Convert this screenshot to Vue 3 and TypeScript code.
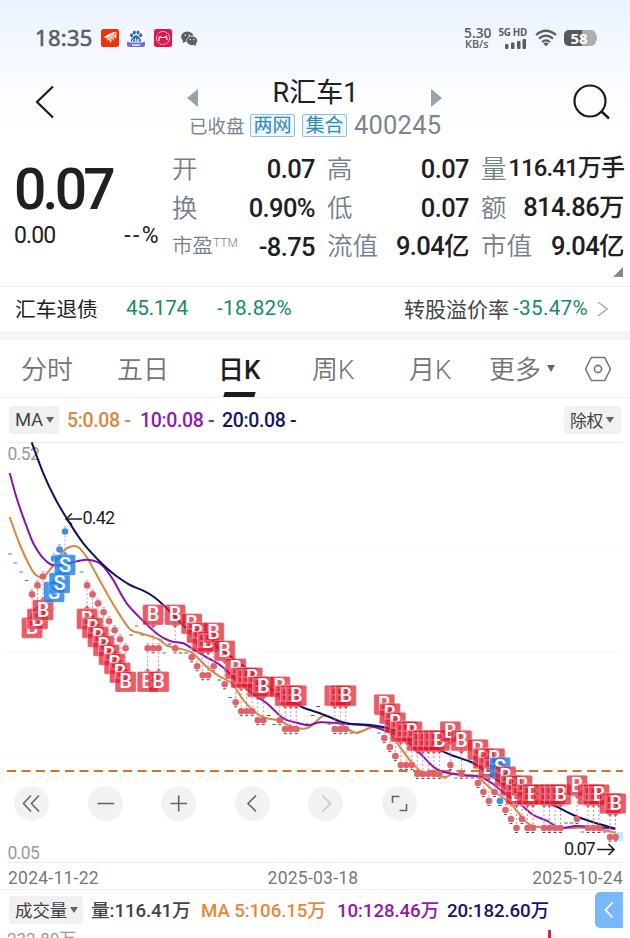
<script setup lang="ts">
type Point = [number, number]
type Kind = 'B' | 'S'
interface Marker { x: number; y: number; boxY: number; kind: Kind; below: boolean }

const FIRST_X = 10
const STEP_X = 5.505
const TOP_Y = 89.5
const STEP_Y = 8.985
const BOX_OFFSET = 33.5

const xOf = (i: number): number => FIRST_X + STEP_X * i
const yOf = (n: number): number => TOP_Y + STEP_Y * n

// [bar index, price level below the peak, kind, box under the dot]
const signals: [number, number, Kind, boolean][] = [
  [4, 7, 'B', true], [5, 6, 'B', true], [6, 5, 'B', true],
  [8, 3, 'S', true], [9, 2, 'S', true], [10, 0, 'S', true],
  [14, 6, 'B', true], [15, 7, 'B', true], [16, 8, 'B', true], [17, 9, 'B', true],
  [18, 10, 'B', true], [19, 11, 'B', true], [20, 12, 'B', true], [21, 13, 'B', true],
  [25, 13, 'B', true], [26, 13, 'B', false], [27, 13, 'B', true], [30, 13, 'B', false],
  [33, 14, 'B', false], [34, 15, 'B', false], [35, 16, 'B', false], [36, 16, 'B', false],
  [37, 15, 'B', false], [39, 17, 'B', false], [41, 19, 'B', false], [42, 20, 'B', false],
  [43, 20, 'B', false], [44, 20, 'B', false], [45, 21, 'B', false], [46, 21, 'B', false],
  [49, 21, 'B', false], [50, 22, 'B', false], [51, 22, 'B', false], [52, 22, 'B', false],
  [59, 22, 'B', false], [60, 22, 'B', false], [61, 22, 'B', false],
  [68, 23, 'B', false], [69, 24, 'B', false], [70, 25, 'B', false], [71, 26, 'B', false],
  [72, 26, 'B', false], [73, 26, 'B', false], [74, 27, 'B', false], [75, 27, 'B', false],
  [76, 27, 'B', false], [77, 27, 'B', false], [78, 27, 'B', false], [80, 26, 'B', false],
  [82, 27, 'B', false], [85, 28, 'B', false], [86, 29, 'B', false], [87, 30, 'B', false],
  [88, 29, 'B', false], [89, 30, 'S', false], [90, 31, 'B', false], [91, 32, 'B', false],
  [92, 33, 'B', false], [93, 32, 'B', false], [94, 33, 'B', false], [95, 33, 'B', false],
  [97, 33, 'B', false], [98, 33, 'B', false], [99, 33, 'B', false], [100, 33, 'B', false],
  [103, 32, 'B', false], [105, 33, 'B', false], [106, 33, 'B', false], [107, 33, 'B', false],
  [109, 34, 'B', false], [110, 34, 'B', false],
]

const markers: Marker[] = signals.map(([i, n, kind, below]) => ({
  x: xOf(i),
  y: yOf(n),
  boxY: yOf(n) + (below ? BOX_OFFSET : -BOX_OFFSET),
  kind,
  below,
}))

// Flat sessions without a trade signal: [bar index, y, colour]
const quiet: [number, number, string][] = [
  [0, 112, '#2c8b84'], [1, 121, '#2c8b84'], [2, 130, '#2c8b84'], [3, 138.5, '#2c8b84'],
  [13, 130, '#2c8b84'], [22, 193, '#555'], [23, 184, '#a66'], [24, 193, '#555'],
  [28, 211, '#2c8b84'], [29, 202, '#555'], [31, 211, '#555'], [32, 211, '#555'],
  [38, 238, '#555'], [40, 255.5, '#2c8b84'], [47, 273.5, '#a33'], [48, 282.5, '#2c8b84'],
  [54, 282, '#555'], [55, 273.5, '#a33'], [56, 264.5, '#a33'], [58, 282, '#2c8b84'],
  [62, 291, '#555'], [63, 291, '#a33'], [67, 291, '#2c8b84'], [79, 336, '#a66'],
  [81, 336, '#2c8b84'], [83, 336, '#2c8b84'], [84, 336, '#555'], [96, 385, '#555'],
  [101, 381, '#555'], [102, 381, '#555'], [104, 390, '#2c8b84'], [108, 390, '#555'],
]

function curve(points: Point[]): string {
  let d = `M${points[0][0]} ${points[0][1]}`
  for (let i = 0; i < points.length - 1; i++) {
    const a = points[Math.max(i - 1, 0)]
    const b = points[i]
    const c = points[i + 1]
    const e = points[Math.min(i + 2, points.length - 1)]
    const c1 = [b[0] + (c[0] - a[0]) / 6, b[1] + (c[1] - a[1]) / 6]
    const c2 = [c[0] - (e[0] - b[0]) / 6, c[1] - (e[1] - b[1]) / 6]
    d += `C${c1[0].toFixed(1)} ${c1[1].toFixed(1)} ${c2[0].toFixed(1)} ${c2[1].toFixed(1)} ${c[0]} ${c[1]}`
  }
  return d
}

const ma5 = curve([
  [9.7, 75], [20, 103], [32, 128], [38.3, 134.5], [44, 134.5], [55, 121], [63, 109.5], [70.7, 104.5], [78, 105],
  [87.3, 116], [96.7, 133], [106.7, 151], [116.7, 168], [130, 187.3], [140, 191], [158.3, 197], [166.7, 203.5],
  [176.7, 206], [191.7, 210.7], [208.3, 226.3], [220, 234.7], [231.7, 241.5], [243.3, 258], [253.3, 268.7],
  [263.3, 275.3], [280, 278.7], [290, 284], [306.7, 286.3], [321.7, 274.7], [328, 274], [335, 278], [346.7, 286.3],
  [356.7, 290.7], [371.7, 285.3], [381.7, 285.3], [390, 291.3], [403.3, 309.7], [413.3, 322.3], [421.7, 329.7],
  [433, 333], [445, 335], [453, 332], [466.7, 334], [476.7, 334.7], [493.3, 348.7], [510, 361.3], [521.7, 374.7],
  [533.3, 384], [567, 386], [586.7, 385.7], [603.3, 388], [615.3, 390.7],
])
const ma10 = curve([
  [9.7, 31], [16.7, 56.3], [26.7, 84.7], [33.3, 101.3], [43.3, 116.3], [55, 123.5], [75, 119.7], [87.3, 117.7],
  [98.3, 120.3], [105, 126.3], [113.3, 138], [126.7, 161.3], [143.3, 179], [158, 192.5], [170, 199], [183.3, 201.3],
  [193.3, 207.3], [206.7, 215.3], [220, 223], [233.3, 234.7], [250, 249.7], [266.7, 261.3], [283.3, 276.3],
  [296.7, 280.7], [308.3, 283.3], [320, 280.3], [340, 281.3], [348.3, 282], [370, 284], [388.3, 289.7], [403, 296],
  [416.7, 308], [433.3, 324.7], [443.3, 330], [462, 333], [480, 334.7], [493, 342], [506.7, 353], [520, 362],
  [533.3, 373], [546.7, 378.7], [560, 386], [575, 384], [586.7, 384.7], [603, 385.7], [615.3, 386.7],
])
const ma20 = curve([
  [31.7, 0.3], [43.3, 31.3], [55, 56.3], [66.7, 76.3], [83.3, 101.3], [103.3, 123], [115, 133], [130, 143],
  [143.3, 148.7], [154, 155], [163.3, 163], [176.7, 176.3], [186.7, 186.3], [213, 202], [243.3, 224], [273, 248],
  [300, 264], [310, 268], [320, 271.3], [340, 279.2], [350, 281.7], [370, 283], [388.3, 286.3], [416, 298],
  [443.3, 309.7], [453, 313.7], [470, 319.5], [480, 325.3], [500, 340], [530, 354], [556.7, 364.7], [573.3, 373],
  [593.3, 380.3], [615.3, 386.7],
])

const stats: { label: string; value: string; sup?: string; cls?: string }[][] = [
  [{ label: '开', value: '0.07' }, { label: '换', value: '0.90%' }, { label: '市盈', sup: 'TTM', value: '-8.75', cls: 'small' }],
  [{ label: '高', value: '0.07' }, { label: '低', value: '0.07' }, { label: '流值', value: '9.04亿' }],
  [{ label: '量', value: '116.41万手', cls: 'tight' }, { label: '额', value: '814.86万' }, { label: '市值', value: '9.04亿' }],
]

const tabs = ['分时', '五日', '日K', '周K', '月K']
const tools: { name: string; d: string; muted?: boolean }[] = [
  { name: 'start', d: 'M17 9.5 9.5 17.5 17 25.5M25 9.5 17.5 17.5 25 25.5' },
  { name: 'out', d: 'M9.5 17.5H26' },
  { name: 'in', d: 'M9.5 17.5H26M17.7 9.5V25.5' },
  { name: 'prev', d: 'M21 9.5 13 17.5 21 25.5' },
  { name: 'next', d: 'M14.5 9.5 22.5 17.5 14.5 25.5', muted: true },
  { name: 'expand', d: 'M10.5 17V10.5H17.5M24.5 18V24.5H17.5' },
]
</script>

<template>
  <main class="screen">
    <header class="top">
      <div class="status">
        <span class="clock">18:35</span>
        <svg class="app" viewBox="0 0 18 18"><rect width="18" height="18" rx="2.5" fill="#ee3208" /><path d="M2.5 8.5Q8 4 15.500 2.800L15 10 12.800 7.200 12.700 12 10.700 9 10 14.500 7.500 10.200 6 12 5.700 9Z" fill="#fff" /><path d="M6 10 14.500 4M9.500 11.500 15 4" stroke="#ee3208" stroke-width=".7" /></svg>
        <svg class="app" viewBox="0 0 18 18"><rect width="18" height="18" rx="2.5" fill="#fff" /><g fill="#236bb5"><ellipse cx="4.6" cy="6.3" rx="1.5" ry="2" /><ellipse cx="7.3" cy="3.5" rx="1.5" ry="2" /><ellipse cx="11" cy="3.5" rx="1.5" ry="2" /><ellipse cx="13.7" cy="6.3" rx="1.5" ry="2" /><path d="M9 6.200c2 0 3 2 4.300 3.300 1.400 1.500.700 4-1.300 4H6c-2.200 0-2.700-2.500-1.300-4C6 8.200 7 6.200 9 6.200Z" /></g><path d="M7 10.500a1.500 1.500 0 1 0 1.500 1.500V9M10 10v3h1.700v-3" fill="none" stroke="#fff" stroke-width=".9" /><path d="M0 12.500Q9 15.500 18 12.500V16a2 2 0 0 1-2 2H2a2 2 0 0 1-2-2Z" fill="#756ee0" /><path d="M5 16H13" stroke="#d9d6ff" stroke-width="1.8" /></svg>
        <svg class="app" viewBox="0 0 18 18"><rect width="18" height="18" rx="2.5" fill="#e3134f" /><circle cx="9" cy="9" r="6.6" fill="none" stroke="#ffc4d4" stroke-width=".9" /><path d="M5 12V8.500L6.200 7.500 7.500 8.500H10.800L12.300 7.200 13.200 11" fill="none" stroke="#fff" stroke-width="1.2" /></svg>
        <svg class="app" viewBox="0 0 18 18"><g fill="#5b5e63"><ellipse cx="7.3" cy="7.8" rx="6.2" ry="5.3" /><path d="M3 11 2.600 14 6 12.500Z" /></g><ellipse cx="12" cy="11.8" rx="5.5" ry="4.7" fill="#5b5e63" stroke="#f1f6ff" stroke-width=".7" /><path d="M13 15.500 16 17 15.500 14Z" fill="#5b5e63" /><g fill="#fff"><circle cx="5.3" cy="6.2" r=".8" /><circle cx="9.3" cy="6.2" r=".8" /><circle cx="10.3" cy="10.5" r=".65" /><circle cx="13.7" cy="10.5" r=".65" /></g></svg>
        <div class="network">
          <div class="speed"><b>5.30</b><i>KB/s</i></div>
          <div class="cell">
            <span>5G HD</span>
            <svg width="22" height="10" viewBox="0 0 22 10" fill="#5a5d61"><rect x="0" y="5" width="3.5" height="5" rx="1" /><rect x="6" y="3.5" width="3.5" height="6.5" rx="1" /><rect x="12" y="2" width="3.5" height="8" rx="1" /><rect x="17.5" y="0" width="3.5" height="10" rx="1" /></svg>
          </div>
          <svg class="wifi" width="22" height="18" viewBox="0 0 22 18"><g fill="none" stroke="#5a5d61" stroke-width="2.2"><path d="M1 6Q11-2.500 21 6" /><path d="M4 9.600Q11 3.700 18 9.600" /><path d="M7 13Q11 9.600 15 13" /></g><path d="M8.200 14.500Q11 12.700 13.800 14.500L11 17.500Z" fill="#5a5d61" /></svg>
          <div class="battery"><span>58</span></div>
        </div>
      </div>
      <div class="title-row">
        <svg class="back" width="20" height="34" viewBox="0 0 20 34"><path d="M18 1.500 2 17 18 32.500" fill="none" stroke="#1c1c1e" stroke-width="2.2" /></svg>
        <div class="heading">
          <div class="name-line">
            <svg width="11" height="18" viewBox="0 0 11 18"><path d="M11 0V18L0 9Z" fill="#98a3af" /></svg>
            <h1>R汇车1</h1>
            <svg width="11" height="18" viewBox="0 0 11 18"><path d="M0 0V18L11 9Z" fill="#98a3af" /></svg>
          </div>
          <div class="sub"><span class="state">已收盘</span><span class="tag">两网</span><span class="tag">集合</span><span class="code">400245</span></div>
        </div>
        <svg class="search" width="37" height="37" viewBox="0 0 37 37"><circle cx="17" cy="17" r="15.5" fill="none" stroke="#1c1c1e" stroke-width="2.2" /><path d="M28 27 36 34.500" stroke="#1c1c1e" stroke-width="2.5" /></svg>
      </div>
    </header>

    <section class="quote">
      <div class="price">
        <strong>0.07</strong>
        <div class="change"><span>0.00</span><span class="pct">--%</span></div>
      </div>
      <dl v-for="(column, c) in stats" :key="c" class="stat-col">
        <div v-for="s in column" :key="s.label" class="stat" :class="s.cls">
          <dt>{{ s.label }}<sup v-if="s.sup">{{ s.sup }}</sup></dt>
          <dd>{{ s.value }}</dd>
        </div>
      </dl>
      <i class="corner"></i>
    </section>

    <section class="bond">
      <span class="bond-name">汇车退债</span>
      <span class="green bond-price">45.174</span>
      <span class="green bond-rate">-18.82%</span>
      <span class="premium">转股溢价率</span>
      <span class="green premium-rate">-35.47%</span>
      <svg width="11" height="16" viewBox="0 0 11 16"><path d="M1 1 10 8 1 15" fill="none" stroke="#a6acb5" stroke-width="1.5" /></svg>
    </section>

    <nav class="tabs">
      <span v-for="t in tabs" :key="t" class="tab" :class="{ active: t === '日K' }">{{ t }}</span>
      <span class="tab more">更多<i class="caret"></i></span>
      <svg class="gear" width="28" height="26" viewBox="0 0 28 26"><path d="M7.300 1.500H20.700L26.500 13 20.700 24.500H7.300L1.500 13Z" fill="none" stroke="#757575" stroke-width="1.6" stroke-linejoin="round" /><circle cx="14" cy="13" r="3.6" fill="none" stroke="#757575" stroke-width="1.6" /></svg>
    </nav>

    <section class="averages">
      <span class="chip ma">MA<i class="caret"></i></span>
      <span class="o">5:0.08 -</span>
      <span class="p">10:0.08 -</span>
      <span class="n">20:0.08 -</span>
      <span class="chip adjust">除权<i class="caret"></i></span>
    </section>

    <section class="chart">
      <svg class="plot" width="630" height="421" viewBox="0 0 630 421">
        <g stroke="#ececec"><path d="M7 .5H623M7 420.500H623" /></g>
        <path d="M7 105H623M7 210H623M7 315H623" stroke="#eef0f2" stroke-dasharray="2 2" />
        <text x="7.5" y="17.5" class="axis">0.52</text>
        <text x="7.5" y="416.5" class="axis">0.05</text>
        <rect x="615" y="390" width="8" height="9" fill="#bdebf5" />
        <path d="M7 329H623" stroke="#d07528" stroke-width="2" stroke-dasharray="9 5.5" />
        <path v-for="q in quiet" :key="q[0]" :d="`M${xOf(q[0]) - 1.8} ${q[1]}h3.6`" :stroke="q[2]" />
        <g fill="none" stroke-width="2">
          <path :d="ma5" stroke="#d9873d" />
          <path :d="ma10" stroke="#8a12b0" />
          <path :d="ma20" stroke="#0e1266" />
        </g>
        <g v-for="(m, k) in markers" :key="k" :class="m.kind === 'B' ? 'buy' : 'sell'">
          <path :d="`M${m.x} ${m.y}V${m.boxY}`" class="stem" />
          <path v-if="!m.below" :d="`M${m.x - 1.5} ${Math.min(m.y + 4.5, 399)}h3`" stroke="#555" />
          <path v-else :d="`M${m.x - 1.5} ${m.y - 4.5}h3`" stroke="#a99" />
          <circle :cx="m.x" :cy="m.y" r="3.3" class="dot" />
        </g>
        <g v-for="(m, k) in markers" :key="'b' + k" :class="m.kind === 'B' ? 'buy' : 'sell'">
          <rect :x="m.x - 10.5" :y="m.boxY - 10.3" width="21" height="20.6" rx="1.5" class="box" />
          <path :d="m.below ? `M${m.x - 3} ${m.boxY - 10.3}l3-3 3 3Z` : `M${m.x - 3} ${m.boxY + 10.3}l3 3 3-3Z`" class="tip" />
          <text :x="m.x" :y="m.boxY + 6.6" class="letter">{{ m.kind }}</text>
        </g>
        <path d="M82 77H66M72 71.500 66 77 72 82.500" class="pointer" />
        <text x="82.5" y="82" class="extreme" textLength="32.5">0.42</text>
        <text x="564" y="413" class="extreme" textLength="31.5">0.07</text>
        <path d="M597 407.500H614M608.500 402 614 407.500 608.500 413" class="pointer" />
      </svg>
      <div class="tools">
        <button v-for="t in tools" :key="t.name" :class="{ muted: t.muted }">
          <svg width="35" height="35" viewBox="0 0 35 35"><path :d="t.d" /></svg>
        </button>
      </div>
    </section>

    <div class="dates"><span>2024-11-22</span><span class="mid">2025-03-18</span><span>2025-10-24</span></div>

    <section class="volume">
      <span class="chip vol">成交量<i class="caret"></i></span>
      <span class="k">量:116.41万</span>
      <span class="vo">MA 5:106.15万</span>
      <span class="p">10:128.46万</span>
      <span class="n">20:182.60万</span>
      <span class="drawer"><svg width="12" height="18" viewBox="0 0 12 18"><path d="M9.500 1.500 2.500 9 9.500 16.500" fill="none" stroke="#fff" stroke-width="1.7" /></svg></span>
    </section>
    <section class="volume-plot"><span>232.80万</span><i></i></section>
  </main>
</template>

<style>
body { background: #fff; overflow: hidden; }
</style>

<style scoped>
* { box-sizing: border-box; }
.screen { width: 630px; height: 938px; overflow: hidden; background: #fff; color: #202022; font-family: Roboto, "Noto Sans CJK SC", sans-serif; white-space: nowrap; }
.top { height: 150px; background: linear-gradient(#eaf3ff 0, #f4f8ff 50px, #fbfdff 95px, #fff 140px); }
.status { display: flex; align-items: center; height: 75px; padding: 0 35px; }
.clock { width: 66px; margin-top: -2px; font: 400 22px "Noto Sans", sans-serif; color: #5b5e62; -webkit-text-stroke: .6px #5b5e62; letter-spacing: .3px; }
.app { width: 18px; height: 18px; margin-right: 8.3px; }
.network { display: flex; align-items: center; margin-left: auto; color: #5a5d61; }
.speed { width: 35px; display: flex; flex-direction: column; align-items: flex-start; font-family: "Open Sans", sans-serif; }
.speed b { font-size: 13.8px; line-height: 11px; font-weight: 600; letter-spacing: 0; }
.speed i { font: 600 10.8px/11px "Open Sans", sans-serif; padding-left: 1px; }
.cell { display: flex; flex-direction: column; align-items: flex-end; width: 28px; gap: 1px; margin-right: 8px; }
.cell span { font: 700 9.8px/11px "Open Sans", sans-serif; letter-spacing: -.3px; }
.battery { width: 32px; height: 16px; margin-left: 7px; margin-right: -1px; border-radius: 5px; background: linear-gradient(90deg, #55585c 56%, #aaadb2 56%); color: #fff; text-align: center; position: relative; }
.battery::after { content: ""; position: absolute; left: 31px; top: 5px; width: 2px; height: 6px; border-radius: 0 2px 2px 0; background: #aaadb2; }
.battery span { display: block; font: 700 15px/16px "Open Sans", sans-serif; padding-right: 2px; }
.title-row { display: flex; height: 66px; padding: 0 20px 0 35px; }
.back { margin-top: 10px; }
.search { margin: 9px 0 0 auto; }
.heading { width: 255px; margin-left: 132px; }
.name-line { display: flex; align-items: center; justify-content: space-between; height: 36px; padding-top: 2px; }
.name-line svg { margin-top: 8px; }
h1 { margin: -3px 0 0 2px; font: 400 27px/36px Roboto, "Noto Sans CJK SC", sans-serif; }
.sub { display: flex; align-items: center; height: 28px; color: #7a8591; padding-left: 2px; }
.state { width: 61px; font-size: 18.5px; }
.tag { width: 45px; height: 23px; margin-right: 7px; border: 1px solid #8fc0df; border-radius: 2px; background: #eef8fe; color: #2f88bb; text-align: center; font-size: 19px; line-height: 21px; }
.code { font-size: 25.5px; letter-spacing: .2px; }
.quote { display: flex; height: 137px; position: relative; border-bottom: 1px solid #f0f0f0; }
.price { width: 172px; padding-left: 14px; }
.price strong { display: block; margin-top: 9px; font-size: 57px; font-weight: 500; line-height: 62px; letter-spacing: -3.8px; }
.change { display: flex; justify-content: space-between; width: 145px; margin-top: 1px; font-size: 23px; line-height: 28px; letter-spacing: -.9px; }
.pct { letter-spacing: 2.4px; margin-right: -2px; }
.stat-col { margin: 0 12px 0 0; width: 143px; }
.stat-col:nth-of-type(2) { width: 142px; }
.stat-col:nth-of-type(3) { margin-right: 0; }
.stat { display: flex; justify-content: space-between; align-items: center; height: 38.7px; line-height: 34px; }
dt { color: #74808d; font-size: 25.5px; font-weight: 350; margin-top: -1px; }
.small dt { font-size: 20.5px; }
.small sup { font-size: 12px; vertical-align: 6px; line-height: 0; }
dd { margin: 0; font-size: 25.5px; font-weight: 500; letter-spacing: -.6px; line-height: 34px; height: 34px; }
.tight dd { font-size: 24px; letter-spacing: -.9px; }
.stat-col:nth-of-type(3) dd, .stat-col:nth-of-type(2) .stat:last-child dd { margin-top: -2px; }
.corner { position: absolute; right: 7px; bottom: 9px; border-left: 10px solid transparent; border-bottom: 10px solid #85888c; }
.bond { display: flex; align-items: center; height: 53px; border-bottom: 9px solid #f4f4f5; padding: 0 22px 0 15px; font-size: 20.7px; }
.bond span { margin-top: -2px; }
.green { color: #138c61; }
.bond-name { width: 111px; }
.bond-price { width: 91px; letter-spacing: -.3px; }
.bond-rate { letter-spacing: .3px; }
.bond .premium { margin-left: auto; color: #444; font-size: 21px; }
.bond .premium-rate { margin-right: 9px; margin-left: 4px; letter-spacing: .3px; }
.tabs { display: flex; height: 58px; border-bottom: 1px solid #f1f1f1; padding-left: 21px; color: #757575; font-size: 26px; font-weight: 350; align-items: center; }
.tab { width: 96px; height: 57px; line-height: 61px; }
.tab:nth-child(3) { width: 95px; }
.tab.active { color: #1d1d1f; font-weight: 500; padding-left: 5px; position: relative; }
.tab.active::after { content: ""; position: absolute; left: 11px; bottom: 0; width: 31px; height: 5px; background: #1d1d1f; transform: skewX(-15deg); }
.tab:nth-child(4) { padding-left: 4px; }
.tab:nth-child(5) { width: 85px; padding-left: 5px; }
.caret { display: inline-block; border: 4.5px solid transparent; border-top: 7px solid #666; border-bottom: 0; }
.more { width: 95px; }
.more .caret { margin-left: 6px; vertical-align: 7px; }
.averages { display: flex; align-items: center; height: 44px; padding: 0 9px; font-size: 19.5px; font-weight: 500; letter-spacing: -.35px; }
.chip { display: flex; align-items: center; height: 28px; border-radius: 3px; background: #f1f1f2; color: #444; font-weight: 400; }
.chip .caret { border-left-width: 4px; border-right-width: 4px; border-top-width: 6px; margin-left: 3px; }
.ma { width: 50px; padding-left: 6px; margin-right: 8px; font-size: 18.5px; }
.adjust { width: 57px; padding-left: 6px; margin-left: auto; font-size: 16.8px; }
.o { color: #d9873d; width: 73px; }
.p { color: #8e18b5; }
.averages .p { width: 82px; }
.n { color: #131668; }
.chart { height: 421px; position: relative; }
.plot { display: block; }
.axis { font-size: 17.5px; fill: #999; letter-spacing: -.6px; }
.extreme { font-size: 18px; fill: #1c1c1e; }
.pointer { fill: none; stroke: #1c1c1e; stroke-width: 1.6; }
.stem { stroke-width: 1; stroke-dasharray: 2 2; }
.buy .stem { stroke: #d98c98; }
.sell .stem { stroke: #7cb6ea; }
.buy .dot { fill: #df626c; }
.sell .dot { fill: #3b91e5; }
.box { stroke: #fff; stroke-opacity: .5; stroke-width: .6; }
.buy .box, .buy .tip { fill: #df1728; fill-opacity: .7; }
.sell .box, .sell .tip { fill: #187ee9; fill-opacity: .8; }
.letter { fill: #fff; font-size: 20px; text-anchor: middle; font-weight: 500; }
.tools { position: absolute; left: 14px; top: 344px; display: flex; gap: 38.5px; }
.tools button { width: 35px; height: 35px; padding: 0; border: 0; border-radius: 50%; background: #f2f2f3; }
.tools svg { display: block; }
.tools path { fill: none; stroke: #666; stroke-width: 1.6; }
.tools .muted path { stroke: #c8c8c8; }
.dates { display: flex; justify-content: space-between; height: 27px; padding: 0 7px 0 8px; border-bottom: 1px solid #f2f2f2; font-size: 17.5px; line-height: 30px; letter-spacing: .25px; color: #777; }
.mid { margin-right: 5px; }
.volume { display: flex; align-items: center; height: 40px; padding-left: 9px; font-size: 18.7px; font-weight: 500; letter-spacing: -.1px; }
.volume > span { margin-top: -1px; }
.vol { width: 74px; padding-left: 6px; margin-right: 8px; font-size: 17.5px; }
.k { width: 110px; color: #444; }
.vo { width: 136px; color: #df8a3c; }
.volume .p { width: 110px; }
.volume .k, .volume .vo, .volume .p, .volume .n { margin-top: -3px; }
.drawer { display: flex; align-items: center; width: 28px; height: 36px; margin-left: auto; margin-right: 7px; padding-left: 8px; border-radius: 5px 0 0 5px; background: #77b9fb; }
.volume-plot { display: flex; height: 10px; padding: 0 7px; justify-content: space-between; color: #999; font-size: 17px; line-height: 19px; }
.volume-plot i { width: 3px; height: 10px; margin-right: 72px; background: #d52b3c; }
</style>
